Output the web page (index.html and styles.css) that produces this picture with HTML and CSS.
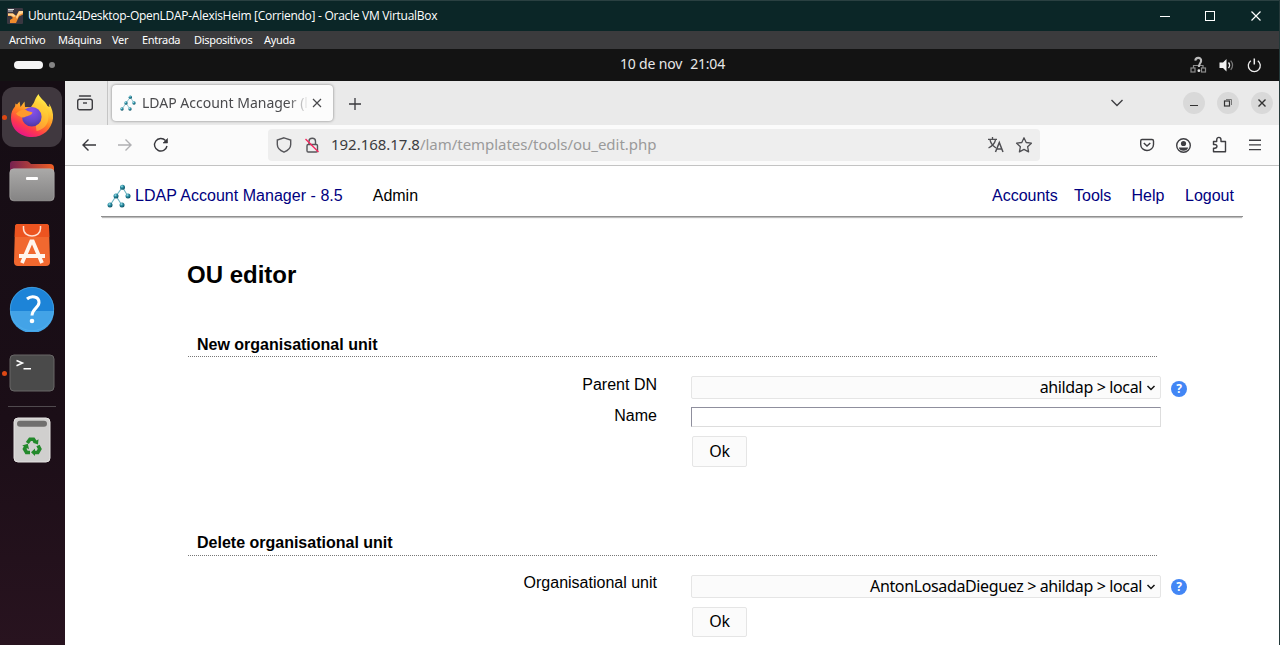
FILE: index.html
```html
<!DOCTYPE html>
<html lang="es">
<head>
<meta charset="utf-8">
<title>LDAP Account Manager</title>
<link rel="stylesheet" href="styles.css">
</head>
<body>
<svg width="0" height="0" class="defs">
  <defs>
    <radialGradient id="ball" cx=".38" cy=".32" r=".75"><stop offset="0" stop-color="#a5e4ee"/><stop offset=".4" stop-color="#2c8fa3"/><stop offset="1" stop-color="#07475a"/></radialGradient>
    <symbol id="lam" viewBox="0 0 24 24">
      <path d="M15.500 3.200 9 12 3.300 21M15.500 3.200 20.800 12M9 12l5.800 9" fill="none" stroke="#6fb6c4" stroke-width="1.100"/>
      <g fill="url(#ball)"><circle cx="15.500" cy="3.200" r="2.500"/><circle cx="9" cy="12" r="2.500"/><circle cx="21" cy="12" r="2.500"/><circle cx="3" cy="21" r="2.500"/><circle cx="15" cy="21" r="2.500"/></g>
    </symbol>
  </defs>
</svg>
<div class="window">
  <header class="titlebar">
    <svg class="vbox" width="16" height="16" viewBox="0 0 16 16"><rect width="16" height="16" rx="1" fill="#3a3741"/><path d="M1 5.500h5l3 2.500 3-5h4v3.500l-4 2L9 15H3v-3l3-2-2-2H1z" fill="#ef8b2c"/><path d="M1 5.500h5l3 2.500-2 1-3-1.500H1zM12 3h4v2l-4 2-2 4-1-2z" fill="#ffd592"/><path d="M1 1.500h6M1 3h5" stroke="#ddd"/></svg>
    <span class="title">Ubuntu24Desktop-OpenLDAP-AlexisHeim [Corriendo] - Oracle VM VirtualBox</span>
    <svg class="wincontrols" width="104" height="12" viewBox="0 0 104 12" fill="none" stroke="#fff"><path d="M0 6.500h10"/><rect x="45.500" y="1.500" width="9" height="9"/><path d="M91.500 1.500l9 9M100.500 1.500l-9 9" stroke-width="1.200"/></svg>
  </header>
  <nav class="menubar"><span>Archivo</span><span>Máquina</span><span>Ver</span><span>Entrada</span><span>Dispositivos</span><span>Ayuda</span></nav>
  <div class="topbar">
    <div class="spaces"><i class="pill"></i><i class="dot"></i></div>
    <div class="clock"><span>10 de nov</span><span class="time">21:04</span></div>
    <svg class="tray" width="72" height="18" viewBox="0 0 72 18" fill="none">
      <g stroke="#8b8b8b" stroke-width="1.200"><path d="M3.500 12V9.500h9.500V12"/><rect x="1" y="12" width="4" height="4"/><rect x="11.500" y="12" width="4" height="4"/></g>
      <path d="M5.300 4.600c.4-4 6.200-3.400 5.800.2C10.900 7.300 8.900 7.500 8.900 11" stroke="#bdbdbd" stroke-width="2.100"/><circle cx="8.900" cy="14.700" r="1.400" fill="#e8e8e8"/>
      <path d="M29.500 6.500H33L36.500 3v12.500L33 12h-3.500z" fill="#f2f2f2"/><path d="M38.500 6.500q2.200 2.800 0 5.600" stroke="#eee" stroke-width="1.300"/><path d="M40.700 4.600q3.800 4.600 0 9.200" stroke="#777" stroke-width="1.200"/>
      <path d="M60.800 4.700a6 6 0 1 0 7 0" stroke="#eee" stroke-width="1.300"/><path d="M64.300 2.500v6" stroke="#eee" stroke-width="1.500"/>
    </svg>
  </div>
  <div class="desktop">
    <aside class="dock">
      <div class="app active running">
        <svg width="46" height="46" viewBox="0 0 46 46">
          <defs><linearGradient id="ff" x1=".8" y1=".05" x2=".3" y2="1"><stop offset="0" stop-color="#fff44f"/><stop offset=".3" stop-color="#ffc431"/><stop offset=".55" stop-color="#ff8023"/><stop offset=".78" stop-color="#ff3750"/><stop offset="1" stop-color="#e5148b"/></linearGradient><radialGradient id="fp" cx=".5" cy=".2" r=".9"><stop offset="0" stop-color="#8a50ee"/><stop offset=".6" stop-color="#6446c8"/><stop offset="1" stop-color="#4a2f93"/></radialGradient></defs>
          <path d="M29.500 0c1 4 7 7 9 12l2 1-.5-3.500c3 4.500 4.500 9.500 4 15C42.500 35.500 34 43 23 43 11 43 2 35 2 23.500c0-5 1.500-8 4-11l.5-3L8 10.500l2.500-3L11.500 13l4-5.500.500 5.500h6l3-4.500c1-3 2.500-6 4.500-8.500z" fill="url(#ff)"/>
          <path d="M27 10c7 0 12 5 12.500 13 0 8-6 13-12 14l-3-22z" fill="#ffd13a" opacity=".55"/>
          <circle cx="22.800" cy="22.800" r="9.800" fill="url(#fp)"/>
          <path d="M7 19.500c3-2.500 6-4.500 10-3.500 2 1.500 5 1.500 6.500 2.500-1 3-4 3-6.500 4-1.500.8-3.500 1.500-5 .5-2-1-4-1.500-5-3.500z" fill="#ff9a2c"/>
        </svg>
      </div>
      <div class="app">
        <svg width="46" height="42" viewBox="0 0 46 42"><defs><linearGradient id="fo"><stop stop-color="#762150"/><stop offset="1" stop-color="#ef5f24"/></linearGradient><linearGradient id="fg" x2="0" y2="1"><stop stop-color="#aaa9a8"/><stop offset="1" stop-color="#858484"/></linearGradient></defs><path d="M1 12V4q0-3 3-3h13q2 0 3 1l2 2h19q4 0 4 4v8H1z" fill="url(#fo)"/><rect x=".8" y="8.800" width="44.400" height="32" rx="4" fill="url(#fg)" stroke="#b5b3b2" stroke-width=".6"/><rect x="17" y="17" width="12" height="3" rx="1" fill="#fff"/></svg>
      </div>
      <div class="app">
        <svg width="38" height="44" viewBox="0 0 38 44"><path d="M5 1h28q3 0 3 3l1 35q0 4-4 4H5q-4 0-4-4L2 4q0-3 3-3z" fill="#f1682f"/><path d="M5 1h28q3 0 3 3l.3 10H1.700L2 4q0-3 3-3z" fill="#ec5420"/><path d="M10.500 3v2.500c0 10 17 10 17 0V3" fill="none" stroke="#ffe1d2" stroke-width="1.500"/><path d="M9 40 18.200 18.500h1.600L29 40M6 33h26" fill="none" stroke="#fff5ed" stroke-width="3.800"/></svg>
      </div>
      <div class="app raised">
        <svg width="46" height="46" viewBox="0 0 46 46"><circle cx="23" cy="23" r="22" fill="#1d84d8"/><path d="M1 25h44a22 22 0 0 1-44 0z" fill="#43a3e7"/><circle cx="23" cy="23" r="21.700" fill="none" stroke="#54b4ee" stroke-width=".6"/><path d="M18 13c4-3.500 12-3 12 3.500 0 5-7 6.500-7 13" fill="none" stroke="#fff" stroke-width="3"/><circle cx="23" cy="35" r="2.300" fill="#fff"/></svg>
      </div>
      <div class="app running">
        <svg width="46" height="38" viewBox="0 0 46 38"><rect x="1" y="1" width="44" height="36" rx="4" fill="#4a4a4a" stroke="#686666" stroke-width="1"/><path d="M7.500 6.500l6 2.500-6 2.700M14.500 14.800h7.500" fill="none" stroke="#fff" stroke-width="1.500"/></svg>
      </div>
      <hr>
      <div class="app">
        <svg width="38" height="46" viewBox="0 0 38 46"><rect x="1" y="1" width="36" height="44" rx="4" fill="#d0cfce" stroke="#e5e3e2"/><rect x="4" y="3.800" width="30" height="6" rx="3" fill="#706f6e"/><g fill="none" stroke="#23892b" stroke-width="3.600"><path d="M14.300 26 17 22.200h3.500l2 3"/><path d="M25 28.500l1.800 3.500-2 3.500h-3"/><path d="M17 35.500h-3.500L11.500 32l1.300-2.500"/></g><path d="M25.500 22.200l-.5 5.300-5-1.800zM22 31.500v7.500l-4-3.700zM9.200 28.500l5.600-1.700 1.200 5.500z" fill="#23892b"/></svg>
      </div>
    </aside>
    <main class="browser">
      <div class="tabstrip">
        <div class="view"><svg width="18" height="18" viewBox="0 0 18 18" fill="none" stroke="#3e3e42" stroke-width="1.400"><path d="M3.500 2h11" stroke-linecap="round"/><rect x="1.700" y="5.200" width="14.600" height="10.600" rx="2"/><path d="M7 9h4"/></svg></div>
        <div class="tab"><svg width="16" height="16"><use href="#lam"/></svg><span class="tabtitle">LDAP Account Manager (l</span><svg width="10" height="10" viewBox="0 0 10 10" stroke="#48484b" stroke-width="1.200"><path d="M1 1l8 8M9 1 1 9"/></svg></div>
        <svg class="plus" width="14" height="14" viewBox="0 0 14 14" stroke="#38383d" stroke-width="1.300"><path d="M1 7h12M7 1v12"/></svg>
        <svg class="chev" width="14" height="10" viewBox="0 0 14 10" fill="none" stroke="#3e3e42" stroke-width="1.400"><path d="M1.500 2l5.500 5.500L12.500 2"/></svg>
        <div class="ctl"><svg width="22" height="22" viewBox="0 0 22 22" stroke="#333"><path d="M7 13.500h8"/></svg></div>
        <div class="ctl"><svg width="22" height="22" viewBox="0 0 22 22" fill="none" stroke="#333"><rect x="7.500" y="9" width="5" height="5" stroke-width="1.200"/><path d="M9 7.500h5.500V13" stroke="#777"/></svg></div>
        <div class="ctl"><svg width="22" height="22" viewBox="0 0 22 22" stroke="#333" stroke-width="1.400"><path d="M7.500 7.500l7 7M14.500 7.500l-7 7"/></svg></div>
      </div>
      <div class="toolbar">
        <svg class="navs" width="94" height="20" viewBox="0 0 94 20" fill="none" stroke="#38383d" stroke-width="1.400"><path d="M16 10H3M8.500 4.500 3 10l5.500 5.500"/><path d="M38 10h13M45.500 4.500 51 10l-5.500 5.500" stroke="#b0b0b3"/><path d="M85.500 5.500a6.300 6.300 0 1 0 1.500 5.500"/><path d="M87.500 3.500v4.500H83z" fill="#38383d" stroke-width=".6"/></svg>
        <div class="urlbar">
          <svg width="44" height="18" viewBox="0 0 44 18" fill="none" stroke="#56565a" stroke-width="1.400"><path d="M8 1.800 14.700 4v4.500C14.700 12 12 14.500 8 16.200 4 14.500 1.300 12 1.300 8.500V4z"/><rect x="31" y="8.500" width="10.500" height="7.500" rx="1.200"/><path d="M33 8.500V5.200c0-4 6.500-4 6.500 0v3.300"/><path d="M29.500 3l13 13" stroke="#f5285f"/></svg>
          <span class="url"><b>192.168.17.8</b>/lam/templates/tools/ou_edit.php</span>
          <svg class="urlend" width="46" height="18" viewBox="0 0 46 18" fill="none" stroke="#4f4f53" stroke-width="1.300"><path d="M1 3.300h9M5.500 1v2.300M3 4c1 4 3 6 6 8M8.500 4c-1 4-4 6.500-7 8"/><path d="M8.500 16 12.300 6.500 16 16M9.700 13h5.300" stroke-width="1.500"/><path d="M37 1.800l2.200 4.700 5.200.7-3.800 3.500 1 5.200-4.600-2.500-4.600 2.500 1-5.200-3.800-3.500 5.200-.7z" stroke-linejoin="round"/></svg>
        </div>
        <svg class="tools" width="124" height="20" viewBox="0 0 124 20" fill="none" stroke="#3e3e42" stroke-width="1.400"><path d="M2 4.500h10q1.500 0 1.500 1.500v3.500c0 3.500-3 6-6.500 6S.7 13 .7 9.500V6Q.7 4.500 2 4.500zM3.800 8 7 11l3.300-3"/><circle cx="43.500" cy="10.500" r="6.800"/><circle cx="43.500" cy="8.500" r="2.600" fill="#3e3e42" stroke="none"/><path d="M38.800 12.500h9.400q-1 3.300-4.700 3.300t-4.700-3.300z" fill="#3e3e42" stroke="none"/><path d="M73.500 6.500h3.200V5c0-3.500 4.300-3.500 4.300 0v1.500h4.500v10.300h-12v-3.600h1.200c3 0 3-3.700 0-3.700h-1.200z" stroke-linejoin="round"/><path d="M109 5.200h12M109 9.900h12M109 14.600h12"/></svg>
      </div>
      <div class="page">
        <header class="lamhead">
          <svg width="24" height="24"><use href="#lam"/></svg>
          <a class="brand">LDAP Account Manager - 8.5</a><span class="admin">Admin</span>
          <nav><a>Accounts</a><a>Tools</a><a>Help</a><a>Logout</a></nav>
        </header>
        <h1>OU editor</h1>
        <section>
          <h2>New organisational unit</h2>
          <div class="row"><label>Parent DN</label><div class="select"><span>ahildap &gt; local</span><svg width="10" height="8" viewBox="0 0 10 8" fill="none" stroke="#111" stroke-width="1.500"><path d="M1.500 2 5 5.500 8.500 2"/></svg></div><i class="help">?</i></div>
          <div class="row name"><label>Name</label><div class="input"></div></div>
          <div class="btn">Ok</div>
        </section>
        <section class="second">
          <h2>Delete organisational unit</h2>
          <div class="row"><label>Organisational unit</label><div class="select"><span>AntonLosadaDieguez &gt; ahildap &gt; local</span><svg width="10" height="8" viewBox="0 0 10 8" fill="none" stroke="#111" stroke-width="1.500"><path d="M1.500 2 5 5.500 8.500 2"/></svg></div><i class="help">?</i></div>
          <div class="btn">Ok</div>
        </section>
      </div>
    </main>
  </div>
</div>
</body>
</html>
```

FILE: styles.css
```css
* { box-sizing: border-box; }
body { margin: 0; font-family: "Liberation Sans", Arial, sans-serif; }
svg { display: block; flex: none; }
.defs { position: absolute; }
.window { width: 1280px; height: 645px; overflow: hidden; display: flex; flex-direction: column; border-right: 1px solid #24393a; white-space: nowrap; }
.titlebar { height: 31px; flex: none; background: #0b2627; border-top: 1px solid #2a4041; display: flex; align-items: center; padding-left: 7px; color: #fff; }
.title { margin-left: 5px; padding-bottom: 1px; font: 12px "Open Sans", sans-serif; letter-spacing: -.275px; }
.wincontrols { margin-left: auto; margin-right: 15px; }
.menubar { height: 18px; flex: none; background: #3b3b3d; color: #fff; display: grid; grid-template-columns: 49px 54px 30px 52px 70px 60px; padding-left: 9px; font: 11px/18px "Noto Sans", sans-serif; letter-spacing: -.3px; }
.topbar { height: 32px; flex: none; background: #131313; display: grid; grid-template-columns: 620px 1fr auto; align-items: center; color: #e8e8e8; }
.spaces { display: flex; align-items: center; gap: 6px; padding-left: 14px; }
.pill { width: 29px; height: 8px; border-radius: 4px; background: #f5f5f5; }
.dot { width: 6px; height: 6px; border-radius: 3px; background: #858585; }
.clock { font: 14px/30px "Noto Sans", sans-serif; display: flex; gap: 8px; letter-spacing: -.18px; padding-bottom: 2px; }
.tray { margin-right: 17px; margin-bottom: 1px; }
.desktop { flex: 1; display: flex; min-height: 0; }
.dock { width: 65px; flex: none; padding: 4px 1px 0 0; background: linear-gradient(#150d14, #1b0e17 60%, #28131f); display: flex; flex-direction: column; }
.app { height: 64px; flex: none; display: flex; align-items: center; justify-content: center; position: relative; }
.raised { padding-bottom: 1px; }
.active::before { content: ""; position: absolute; left: 2px; top: 2px; width: 60px; height: 60px; border-radius: 12px; background: #40383f; }
.active svg { position: relative; }
.running::after { content: ""; position: absolute; left: 2px; top: 29.5px; width: 5px; height: 5px; border-radius: 50%; background: #dd4814; }
.dock hr { width: 48px; height: 1px; border: 0; background: #504a4e; margin: 1px auto; flex: none; }
.browser { flex: 1; min-width: 0; background: #fff; }
.tabstrip { height: 44px; background: #eaeaea; display: flex; align-items: center; }
.view { width: 43px; height: 44px; padding: 13px 0 0 11px; border-right: 1px solid #c5c5c5; }
.tab { width: 221px; height: 36px; margin: 0 0 1px 4px; background: #fcfcfc; border-radius: 4px; box-shadow: 0 0 3px #0007; display: flex; align-items: center; padding: 0 11px 0 8px; }
.tabtitle { flex: 1; margin: 0 4px 0 6px; overflow: hidden; color: #4a4a4d; font: 14px/20px "Noto Sans", sans-serif; -webkit-mask-image: linear-gradient(90deg, #000 145px, transparent 167px); mask-image: linear-gradient(90deg, #000 145px, transparent 167px); }
.plus { margin-left: 15px; margin-top: 2px; }
.chev { margin-left: auto; margin-right: 59px; }
.ctl { width: 22px; height: 22px; border-radius: 50%; background: #d9d9d9; margin-right: 12px; }
.ctl:last-child { margin-right: 6px; }
.toolbar { height: 41px; background: #fbfbfb; border-bottom: 1px solid #c3c3c3; display: flex; align-items: center; padding-left: 15px; }
.urlbar { width: 772px; height: 32px; margin-left: 94px; background: #eee; border-radius: 4px; display: flex; align-items: center; padding: 0 7px 0 8px; }
.url { margin-left: 11px; padding-bottom: 2px; color: #9a9a9a; font: 15px/30px "Noto Sans", sans-serif; letter-spacing: -.03px; }
.url b { font-weight: 400; color: #3c3c40; }
.urlend { margin-left: auto; }
.tools { margin-left: auto; margin-right: 15px; }
.page { color: #000; font-size: 16px; }
.lamhead { margin: 0 36px; height: 51px; border-bottom: 1px solid #909090; box-shadow: 0 2px 1px -1px #bbb; display: flex; align-items: center; padding: 10px 9px 0 6px; }
.lamhead a { color: #000080; }
.brand { margin-left: 4px; letter-spacing: .03px; }
.admin { margin-left: 30px; }
.lamhead nav { margin-left: auto; display: grid; grid-template-columns: 82px 57.5px 53.500px 49px; }
h1 { font-size: 24px; line-height: 28px; margin: 44px 0 0 122px; }
section { margin-left: 123px; padding-top: 46px; }
h2 { width: 969px; height: 22px; margin: 0 0 19px; padding-left: 9px; font-size: 16px; line-height: 20px; border-bottom: 1px dotted #777; }
.row { display: flex; height: 24px; }
label { width: 469px; margin-right: 34px; text-align: right; line-height: 18px; }
.select { width: 470px; height: 23px; border: 1px solid #e5e5e5; border-radius: 2px; background: #fbfbfb; display: flex; justify-content: flex-end; align-items: center; gap: 4px; padding-right: 4px; font: 16px/21px "Noto Sans", sans-serif; letter-spacing: -.37px; }
.help { width: 16px; height: 16px; margin: 5px 0 0 10px; border-radius: 50%; background: #4286f5; color: #fff; font: bold 12px/16px "Noto Sans", sans-serif; text-align: center; }
.name { margin-top: 7px; height: 20px; }
.input { width: 470px; height: 20px; border: 1px solid #ddd; border-top-color: #8f8f9d; border-left-color: #8f8f9d; }
.btn { width: 55px; height: 31px; margin: 9px 0 0 504px; border: 1px solid #e5e5e5; border-radius: 2px; background: #fbfbfb; text-align: center; font: 16px/28px "Noto Sans", sans-serif; letter-spacing: -.2px; }
.second { padding-top: 66px; }
.second h2 { height: 23px; }
.second label { margin-top: -1px; }
.second .help { margin-top: 4px; }
.second .btn { margin-top: 8px; height: 30px; line-height: 27px; }
```
